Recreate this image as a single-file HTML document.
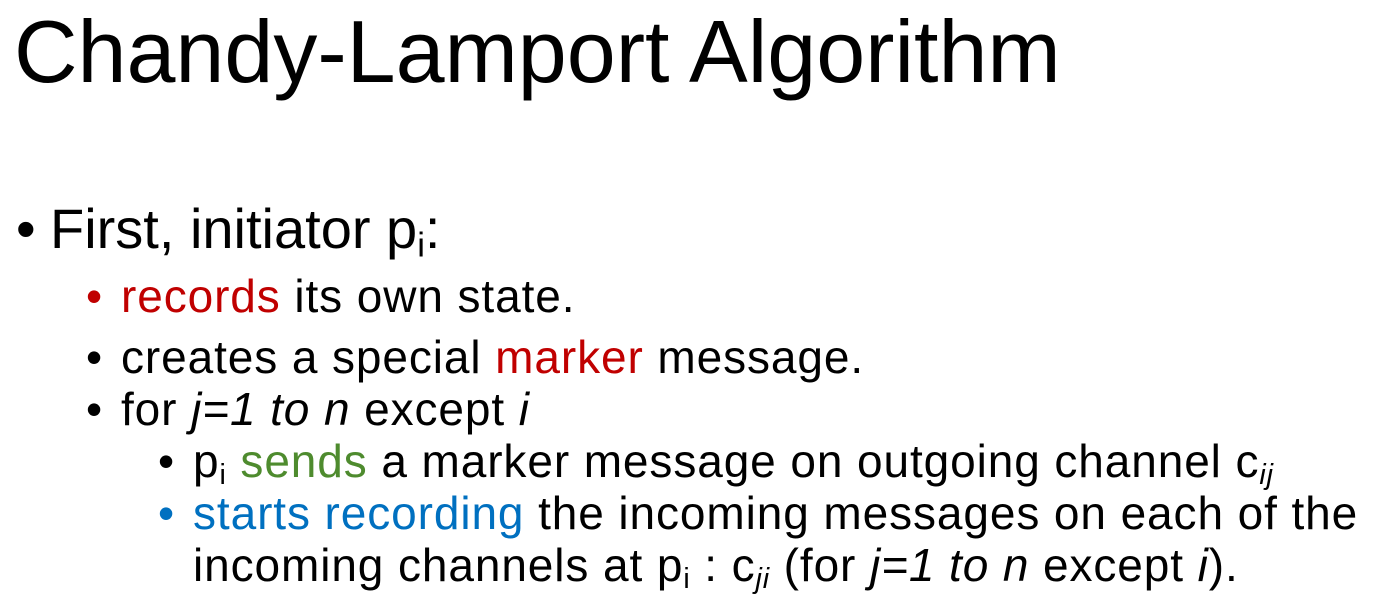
<!DOCTYPE html>
<html><head><meta charset="utf-8"><style>
body{margin:0;width:1383px;height:607px;background:#fff;overflow:hidden;position:relative;font-family:"Liberation Sans",Arial,sans-serif;color:#000}
.l{position:absolute;white-space:nowrap}
.t{font-size:88px;line-height:88px;left:14px;top:8px}
.a{font-size:56px;line-height:56px}
.b{font-size:46px;line-height:46px;letter-spacing:0.9px}
sub{font-size:0.62em;vertical-align:-0.25em;line-height:0}
.r{color:#c00000}.g{color:#4e8b2e}.bl{color:#0070c0}
i{font-style:italic}
</style></head><body>
<div class="l t">Chandy-Lamport Algorithm</div>
<div class="l a" style="left:16px;top:201px">•</div>
<div class="l a" style="left:50px;top:201px">First, initiator p<sub>i</sub>:</div>

<div class="l b r" style="left:86px;top:273px">•</div>
<div class="l b" style="left:121px;top:273px"><span class="r">records</span> its own state.</div>
<div class="l b" style="left:86px;top:334px">•</div>
<div class="l b" style="left:121px;top:334px">creates a special <span class="r">marker</span> message.</div>
<div class="l b" style="left:86px;top:386px">•</div>
<div class="l b" style="left:121px;top:386px">for <i>j=1 to n</i> except <i>i</i></div>

<div class="l b" style="left:158px;top:438px">•</div>
<div class="l b" style="left:193px;top:438px">p<sub>i</sub> <span class="g">sends</span> a marker message on outgoing channel c<sub><i>ij</i></sub></div>
<div class="l b bl" style="left:158px;top:490px">•</div>
<div class="l b" style="left:193px;top:490px"><span class="bl">starts recording</span> the incoming messages on each of the</div>
<div class="l b" style="left:193px;top:542px">incoming channels at p<sub>i</sub> : c<sub><i>ji</i></sub> (for <i>j=1 to n</i> except <i>i</i>).</div>
</body></html>
